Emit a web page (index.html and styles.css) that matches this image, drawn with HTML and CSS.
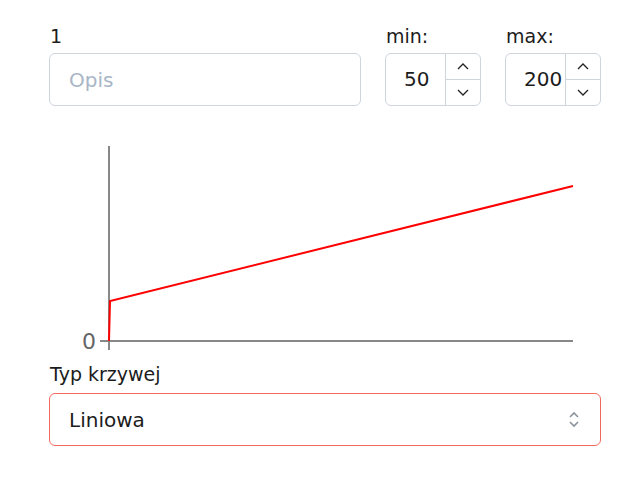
FILE: index.html
```html
<!DOCTYPE html>
<html lang="pl">
<head>
<meta charset="utf-8">
<link rel="stylesheet" href="styles.css">
</head>
<body>
<div class="panel">
  <div class="top-row">
    <div class="field field-desc">
      <label class="label">1</label>
      <input class="text-input" type="text" placeholder="Opis">
    </div>
    <div class="field field-num">
      <label class="label">min:</label>
      <div class="num-input">
        <span class="num-value">50</span>
        <div class="spinner">
          <span class="spin-btn"><svg width="12" height="7" viewBox="0 0 12 7"><path d="M1 6 L6 1 L11 6" fill="none" stroke="#222" stroke-width="1.3"/></svg></span>
          <span class="spin-btn spin-down"><svg width="12" height="7" viewBox="0 0 12 7"><path d="M1 1 L6 6 L11 1" fill="none" stroke="#222" stroke-width="1.3"/></svg></span>
        </div>
      </div>
    </div>
    <div class="field field-num">
      <label class="label">max:</label>
      <div class="num-input">
        <span class="num-value">200</span>
        <div class="spinner">
          <span class="spin-btn"><svg width="12" height="7" viewBox="0 0 12 7"><path d="M1 6 L6 1 L11 6" fill="none" stroke="#222" stroke-width="1.3"/></svg></span>
          <span class="spin-btn spin-down"><svg width="12" height="7" viewBox="0 0 12 7"><path d="M1 1 L6 6 L11 1" fill="none" stroke="#222" stroke-width="1.3"/></svg></span>
        </div>
      </div>
    </div>
  </div>

  <svg class="chart" width="552" height="220" viewBox="0 0 552 220">
    <line x1="60" y1="10" x2="60" y2="214" stroke="#888" stroke-width="2"/>
    <line x1="51" y1="205" x2="524" y2="205" stroke="#888" stroke-width="2"/>
    <text x="47" y="213" text-anchor="end" class="axis-label">0</text>
    <polyline points="60,205 61,165 524,50" fill="none" stroke="#ff0000" stroke-width="2"/>
  </svg>

  <label class="label label-select">Typ krzywej</label>
  <div class="select">
    <span class="select-value">Liniowa</span>
    <svg class="select-icon" width="12" height="17" viewBox="0 0 12 17">
      <path d="M2 6 L6 2 L10 6" fill="none" stroke="#8a939c" stroke-width="1.6"/>
      <path d="M2 11 L6 15 L10 11" fill="none" stroke="#8a939c" stroke-width="1.6"/>
    </svg>
  </div>
</div>
</body>
</html>
```

FILE: styles.css
```css
* { box-sizing: border-box; }
html, body { margin: 0; padding: 0; background: #fff; }
body {
  font-family: "DejaVu Sans", "Open Sans", sans-serif;
  color: #1c1c1c;
}
.panel {
  width: 552px;
  margin-left: 49px;
  padding-top: 24px;
}
.top-row {
  display: flex;
  gap: 24px;
}
.field { display: flex; flex-direction: column; }
.field-desc { width: 312px; }
.field-num { width: 96px; }
.label {
  display: block;
  font-size: 19px;
  line-height: 24px;
  height: 29px;
  padding-left: 1px;
}
.text-input {
  height: 53px;
  width: 100%;
  border: 1px solid #cfd5dc;
  border-radius: 6px;
  padding: 0 19px;
  font: inherit;
  font-size: 20px;
  color: #1c1c1c;
  outline: none;
}
.text-input::placeholder { color: #a9b6c6; }
.num-input {
  height: 53px;
  border: 1px solid #cfd5dc;
  border-radius: 6px;
  display: flex;
  overflow: hidden;
}
.num-value {
  flex: 1;
  font-size: 20px;
  line-height: 51px;
  padding-left: 18px;
  white-space: nowrap;
  overflow: visible;
  width: 60px;
}
.spinner {
  width: 35px;
  border-left: 1px solid #cfd5dc;
  display: flex;
  flex-direction: column;
}
.spin-btn {
  flex: 1;
  display: flex;
  align-items: center;
  justify-content: center;
}
.spin-down { border-top: 1px solid #cfd5dc; }
.chart {
  display: block;
  margin-top: 30px;
}
.axis-label {
  font-family: "DejaVu Sans", sans-serif;
  font-size: 22px;
  fill: #666;
}
.label-select {
  margin-top: 6px;
  height: 31px;
}
.select {
  height: 53px;
  border: 1px solid #f26b5e;
  border-radius: 6px;
  display: flex;
  align-items: center;
  justify-content: space-between;
  padding: 0 20px 0 19px;
}
.select-value { font-size: 20px; }
.select-icon { display: block; }
```
